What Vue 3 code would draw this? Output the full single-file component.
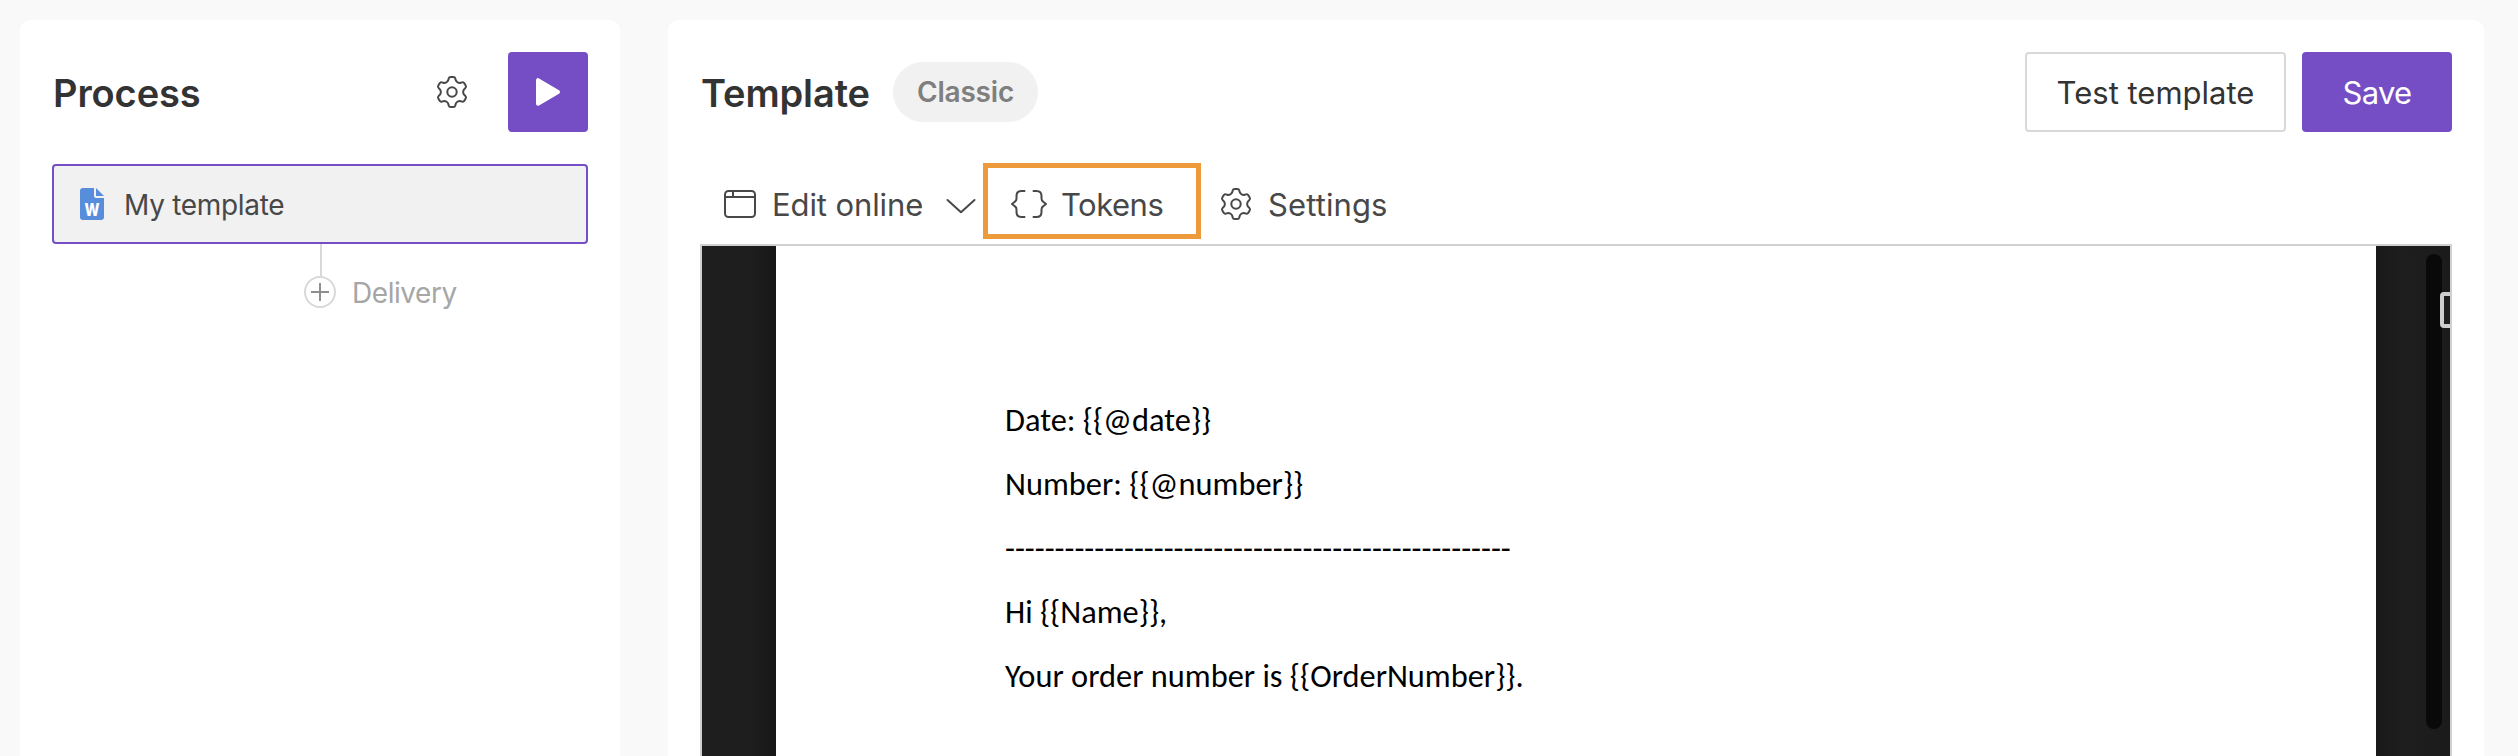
<script setup>
function rotate([x, y], deg) {
  const a = (deg * Math.PI) / 180
  return [x * Math.cos(a) - y * Math.sin(a), x * Math.sin(a) + y * Math.cos(a)]
}

// Closed six-tooth outline with every corner rounded off.
function gearOutline() {
  const outline = [
    [-4, -10.6], [-2.9, -15.1], [2.9, -15.1], [4, -10.6]
  ]
  const pts = []
  for (let i = 0; i < 6; i++) outline.forEach((p) => pts.push(rotate(p, i * 60)))
  const toward = (a, b, d) => {
    const len = Math.hypot(b[0] - a[0], b[1] - a[1])
    const t = Math.min(d / len, 0.5)
    return [a[0] + (b[0] - a[0]) * t, a[1] + (b[1] - a[1]) * t]
  }
  const f = (p) => p.map((n) => n.toFixed(2)).join(' ')
  return pts
    .map((p, i) => {
      const prev = pts[(i + pts.length - 1) % pts.length]
      const next = pts[(i + 1) % pts.length]
      return `${i ? 'L' : 'M'}${f(toward(p, prev, 1.7))}Q${f(p)} ${f(toward(p, next, 1.7))}`
    })
    .join('') + 'Z'
}

const gear = gearOutline()

const lines = [
  'Date: {{@date}}',
  'Number: {{@number}}',
  '-'.repeat(51),
  'Hi {{Name}},',
  'Your order number is {{OrderNumber}}.'
]
</script>

<template>
  <div class="app">
    <aside class="card process">
      <header class="head">
        <h2 class="title process-title">Process</h2>
        <svg class="gear head-gear" width="32" height="34" viewBox="-16 -17 32 34">
          <path :d="gear" /><circle r="4.7" />
        </svg>
        <button class="play" aria-label="Run">
          <svg width="26" height="30" viewBox="0 0 26 30">
            <path d="M3 3.2V26.8L23 15Z" fill="#fff" stroke="#fff" stroke-width="4" stroke-linejoin="round" />
          </svg>
        </button>
      </header>
      <div class="step">
        <svg class="doc-icon" width="24" height="32" viewBox="0 0 24 32">
          <path d="M3 0H14V8Q14 10 16 10H24V29Q24 32 21 32H3Q0 32 0 29V3Q0 0 3 0Z" fill="#588ddb" />
          <path d="M16 0L24 8H16Z" fill="#588ddb" />
          <text x="4.4" y="28" textLength="15" lengthAdjust="spacingAndGlyphs">W</text>
        </svg>
        <span class="step-name">My template</span>
      </div>
      <div class="connector"></div>
      <div class="delivery">
        <svg width="32" height="32" viewBox="0 0 32 32">
          <circle cx="16" cy="16" r="15" fill="#fff" stroke="#d9d9d9" stroke-width="2" />
          <path d="M16 7V25M7 16H25" stroke="#8e8e8e" stroke-width="2" />
        </svg>
        <span class="delivery-name">Delivery</span>
      </div>
    </aside>

    <main class="card template">
      <header class="head">
        <h2 class="title">Template</h2>
        <span class="badge">Classic</span>
        <button class="btn test"><span>Test template</span></button>
        <button class="btn save"><span>Save</span></button>
      </header>

      <nav class="toolbar">
        <div class="tool edit">
          <svg class="line" width="32" height="28" viewBox="0 0 32 28">
            <rect x="1" y="1" width="30" height="26" rx="3.5" /><path d="M1 7H31M9 1V7" />
          </svg>
          <span class="edit-text">Edit online</span>
          <svg class="line" width="30" height="16" viewBox="0 0 30 16">
            <path d="M1.5 2L15 14.2L28.5 2" />
          </svg>
        </div>
        <div class="tool tokens">
          <svg class="line" width="36" height="28" viewBox="0 0 36 28">
            <path d="M13.5 1H10.5Q5.5 1 5.5 6V8.5Q5.5 11 3.5 12L1 14L3.5 16Q5.5 17 5.5 19.5V22Q5.5 27 10.5 27H13.5" />
            <path d="M22.5 1H25.5Q30.5 1 30.5 6V8.5Q30.5 11 32.5 12L35 14L32.5 16Q30.5 17 30.5 19.5V22Q30.5 27 25.5 27H22.5" />
          </svg>
          <span class="tokens-text">Tokens</span>
        </div>
        <div class="tool settings">
          <svg class="gear" width="32" height="34" viewBox="-16 -17 32 34">
            <path :d="gear" /><circle r="4.7" />
          </svg>
          <span class="settings-text">Settings</span>
        </div>
      </nav>

      <section class="editor">
        <div class="gutter left"></div>
        <article class="page">
          <p v-for="line in lines" :key="line">{{ line }}</p>
        </article>
        <div class="gutter right">
          <div class="scrollbar"></div>
          <div class="handle"></div>
        </div>
      </section>
    </main>
  </div>
</template>

<style>
body { margin: 0; background: #f9f9f9; }
</style>

<style scoped>
.app {
  display: flex;
  gap: 48px;
  box-sizing: border-box;
  width: 2518px;
  height: 756px;
  padding: 20px 34px 0 20px;
  overflow: hidden;
  background: #f9f9f9;
  font-family: Inter, "Liberation Sans", sans-serif;
  color: #333;
}
.app * { box-sizing: border-box; }
svg { display: block; flex: none; }
button { border: 0; font: inherit; padding: 0; }
span, h2, p { white-space: nowrap; }
.card {
  background: #fff;
  border-radius: 10px 10px 0 0;
  padding: 32px 32px 0;
}
.process { flex: none; width: 600px; }
.template { flex: 1; display: flex; flex-direction: column; }
.head { display: flex; align-items: center; height: 80px; }
.title {
  margin: 2px 0 0;
  padding-left: 1px;
  font-size: 38px;
  line-height: 46px;
  font-weight: 600;
  letter-spacing: -0.1px;
}
.gear { fill: none; stroke: #484848; stroke-width: 2; stroke-linejoin: round; }
.head-gear { margin-left: auto; }
.play {
  display: flex;
  align-items: center;
  justify-content: center;
  width: 80px;
  height: 80px;
  margin-left: 40px;
  border-radius: 4px;
  background: #754ec5;
}
.step {
  display: flex;
  align-items: center;
  height: 80px;
  margin-top: 32px;
  padding-left: 26px;
  border: 2px solid #754ec5;
  border-radius: 4px;
  background: #f1f1f1;
}
.doc-icon text { font: 800 17px Inter, sans-serif; fill: #fff; }
.step-name { margin: 1px 0 0 20px; font-size: 28px; line-height: 34px; letter-spacing: -0.3px; color: #484848; }
.connector { width: 2px; height: 32px; margin-left: 268px; background: #d9d9d9; }
.delivery { display: flex; align-items: center; height: 32px; margin-left: 252px; color: #a6a6a6; }
.delivery-name { margin: 1px 0 0 16px; font-size: 28px; line-height: 34px; letter-spacing: -0.45px; }
.badge {
  height: 60px;
  width: 145px;
  margin-left: 23px;
  padding-left: 24px;
  border-radius: 30px;
  background: #f1f1f1;
  color: #7f7f7f;
  font-size: 28px;
  font-weight: 600;
  line-height: 61px;
  letter-spacing: -0.2px;
}
.btn { height: 80px; border-radius: 4px; font-size: 31px; line-height: 78px; text-align: center; }
.test {
  width: 261px;
  margin-left: auto;
  border: 2px solid #d9d9d9;
  background: #fff;
  color: #333;
}
.save { width: 150px; margin-left: 16px; background: #754ec5; color: #fff; letter-spacing: -0.7px; line-height: 82px; }
.toolbar {
  display: flex;
  align-items: center;
  height: 80px;
  margin-top: 32px;
  font-size: 31px;
  line-height: 38px;
  color: #484848;
}
.tool { display: flex; align-items: center; height: 76px; }
.tool span { margin-top: 1px; }
.line { fill: none; stroke: #484848; stroke-width: 2; stroke-linecap: round; stroke-linejoin: round; }
.edit { width: 283px; padding-left: 24px; }
.edit-text { width: 172px; margin-left: 16px; letter-spacing: -0.1px; }
.edit .line:last-child { margin-top: 3px; margin-left: 2px; }
.tokens { width: 218px; margin-top: -6px; border: 5px solid #ed9a3b; padding-left: 23px; }
.tokens .line { margin-top: 6px; }
.tokens .tokens-text { margin: 7px 0 0 14px; letter-spacing: -0.5px; }
.settings { margin-left: 19px; }
.settings-text { margin-left: 16px; letter-spacing: 0.1px; }
.editor {
  flex: 1;
  display: flex;
  border: 2px solid #d0d0d0;
  border-bottom: 0;
  overflow: hidden;
}
.gutter { flex: none; width: 74px; background: #1e1e1e; }
.left { background: linear-gradient(90deg, #1e1e1e 65%, #171717); }
.right { position: relative; background: linear-gradient(90deg, #191919, #1e1e1e 40%, #1b1b1b); }
.page {
  flex: 1;
  padding: 142px 0 0 229px;
  background: #fff;
  color: #000;
  font: 32.4px/64px Carlito, Calibri, "Open Sans", sans-serif;
}
.page p { margin: 0; }
.scrollbar {
  position: absolute;
  left: 50px;
  top: 8px;
  width: 16px;
  height: 475px;
  border-radius: 8px;
  background: #090909;
}
.handle {
  position: absolute;
  left: 64px;
  top: 46px;
  width: 20px;
  height: 36px;
  border: 4px solid #cecece;
  border-radius: 4px;
  background: #1e1e1e;
}
</style>
